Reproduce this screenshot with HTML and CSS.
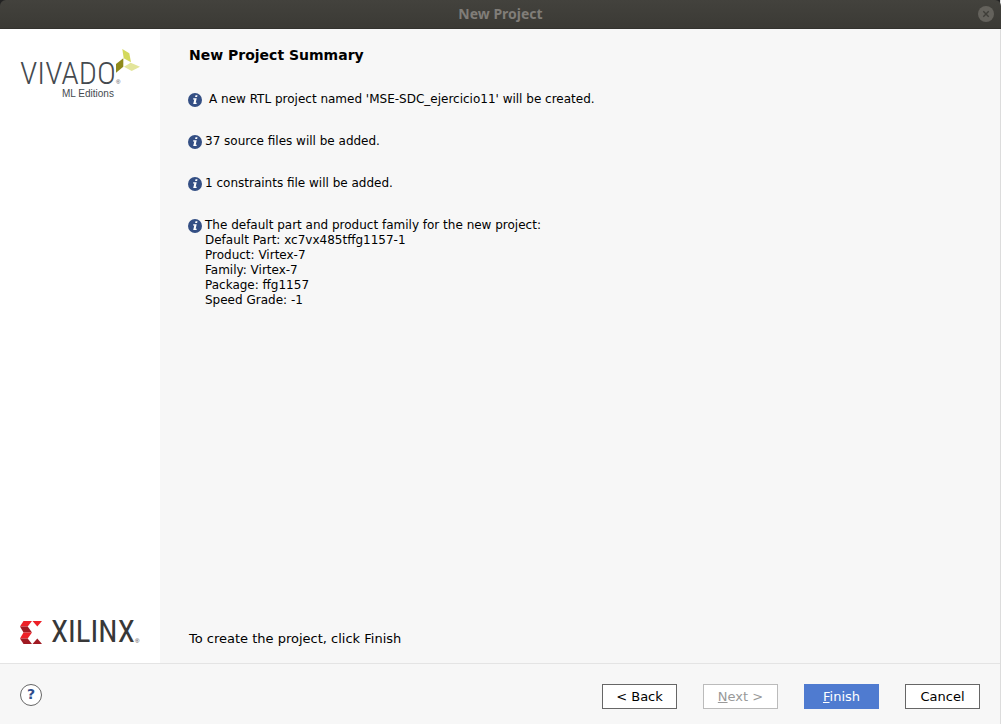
FILE: index.html
```
<!DOCTYPE html>
<html lang="en">
<head>
<meta charset="utf-8">
<title>New Project</title>
<link rel="stylesheet" href="styles.css">
</head>
<body>
<div class="window">
  <header class="titlebar">
    <span class="title">New Project</span>
    <button class="close" aria-label="Close">
      <svg viewBox="0 0 16 16" width="16" height="16"><circle cx="8" cy="8" r="8" fill="#64625c"/><path d="M5.3 5.3l5.4 5.4M10.7 5.3l-5.4 5.4" stroke="#3f3e39" stroke-width="1.4"/></svg>
    </button>
  </header>
  <div class="body">
    <aside class="sidebar">
      <div class="vivado">
        <svg class="leaf" viewBox="0 0 24 25" width="24" height="25"><path d="M6.300 0L13.300 4.300L15 13.300L7.700 9.300z" fill="#d3d95c"/><path d="M0 15L7.300 9.300V17.700L0 23.700z" fill="#8f8a1c"/><path d="M8 17.700L14.700 13.700L24 17.700L15.700 22z" fill="#e3e59b"/></svg>
        <div class="vivado-name">VIVADO<span class="mark">®</span></div>
        <div class="vivado-edition">ML Editions</div>
      </div>
      <div class="xilinx">
        <svg viewBox="0 0 22 23" width="22" height="23"><path d="M3.500 0H12L7.700 5.500H0z" fill="#ed2027"/><path d="M0 5.500H7.700L12 11.500H3.500z" fill="#a01a22"/><path d="M12.500 0H22L17.300 5.500z" fill="#ed2027"/><path d="M3.500 11.500H12L7.700 17.500H0z" fill="#ed2027"/><path d="M0 17.500H7.700L12 23H3.500z" fill="#a01a22"/><path d="M12.500 23L17.300 17.500L22 23z" fill="#a01a22"/></svg>
        <span class="xilinx-name">XILINX</span><span class="mark">®</span>
      </div>
    </aside>
    <main class="content">
      <h1>New Project Summary</h1>
      <ul class="summary">
        <li><svg class="info" viewBox="0 0 14 14"><circle cx="7" cy="7" r="7" fill="#344f84"/><path d="M7.500 2.300h2l-.4 1.800h-2zM5.300 5.300h3.400l-1 4.400h1.100l-.3 1.300H5.200l1.100-4.500H5z" fill="#fff"/></svg><p class="lead">A new RTL project named 'MSE-SDC_ejercicio11' will be created.</p></li>
        <li><svg class="info" viewBox="0 0 14 14"><circle cx="7" cy="7" r="7" fill="#344f84"/><path d="M7.500 2.300h2l-.4 1.800h-2zM5.300 5.300h3.400l-1 4.400h1.100l-.3 1.300H5.200l1.100-4.500H5z" fill="#fff"/></svg><p>37 source files will be added.</p></li>
        <li><svg class="info" viewBox="0 0 14 14"><circle cx="7" cy="7" r="7" fill="#344f84"/><path d="M7.500 2.300h2l-.4 1.800h-2zM5.300 5.300h3.400l-1 4.400h1.100l-.3 1.300H5.200l1.100-4.500H5z" fill="#fff"/></svg><p>1 constraints file will be added.</p></li>
        <li><svg class="info" viewBox="0 0 14 14"><circle cx="7" cy="7" r="7" fill="#344f84"/><path d="M7.500 2.300h2l-.4 1.800h-2zM5.300 5.300h3.400l-1 4.400h1.100l-.3 1.300H5.200l1.100-4.500H5z" fill="#fff"/></svg><p>The default part and product family for the new project:<br>Default Part: xc7vx485tffg1157-1<br>Product: Virtex-7<br>Family: Virtex-7<br>Package: ffg1157<br>Speed Grade: -1</p></li>
      </ul>
      <p class="hint">To create the project, click Finish</p>
    </main>
  </div>
  <footer class="footer">
    <button class="help" aria-label="Help">?</button>
    <div class="actions">
      <button class="btn">&lt; Back</button>
      <button class="btn" disabled><u>N</u>ext &gt;</button>
      <button class="btn primary"><u>F</u>inish</button>
      <button class="btn">Cancel</button>
    </div>
  </footer>
</div>
</body>
</html>
```
FILE: styles.css
```
* { box-sizing: border-box; }
body {
  margin: 0;
  background: #222;
  font: 13px/15px "DejaVu Sans", sans-serif;
  color: #000;
}
h1, p, ul { margin: 0; padding: 0; }
button { font: inherit; padding: 0; }
.window {
  display: flex;
  flex-direction: column;
  min-height: 100vh;
  border-right: 1px solid #dcdcdc;
}
.titlebar {
  display: grid;
  grid-template-columns: 23px 1fr 23px;
  align-items: center;
  height: 29px;
  margin-right: -1px;
  background: linear-gradient(#43423d, #3b3a35);
  border-bottom: 1px solid #33322e;
  border-radius: 6px 6px 0 0;
}
.title {
  grid-column: 2;
  text-align: center;
  font: bold 14px/16px "Noto Sans", sans-serif;
  color: #807d78;
}
.close {
  width: 16px;
  height: 16px;
  border: 0;
  background: none;
}
.close svg { display: block; }
.body { display: flex; flex: 1; background: #f7f7f7; }
.sidebar {
  display: flex;
  flex-direction: column;
  justify-content: space-between;
  width: 160px;
  padding: 20px 19px 19px 20px;
  background: #fff;
}
.vivado { position: relative; padding-top: 8px; color: #454a4f; }
.leaf { position: absolute; left: 96px; top: 0; }
.vivado-name {
  font: 300 32px/32px "Roboto Condensed", "Liberation Sans Narrow", sans-serif;
  white-space: nowrap;
}
.vivado-edition {
  padding-left: 42px;
  font: 10px/10px "Liberation Sans", sans-serif;
  white-space: nowrap;
}
.mark { font: 6px/6px "Liberation Sans", sans-serif; }
.xilinx { display: flex; align-items: flex-end; color: #383838; }
.xilinx svg { flex: none; }
.xilinx-name {
  padding-left: 9px;
  font: 31px/24px "Roboto Condensed", "Liberation Sans Narrow", sans-serif;
}
.content {
  display: flex;
  flex-direction: column;
  flex: 1;
  padding: 18px 28px 17px;
}
h1 { font-size: 14px; line-height: 17px; padding-left: 1px; }
.summary {
  display: grid;
  gap: 26px;
  padding-top: 28px;
  list-style: none;
  font-size: 12px;
}
.summary li { display: flex; gap: 3px; min-height: 16px; }
.info { width: 14px; height: 14px; margin-top: 1px; flex: none; }
.lead { padding-left: 4px; }
.hint { margin-top: auto; padding-left: 1px; }
.footer {
  display: flex;
  align-items: center;
  justify-content: space-between;
  height: 61px;
  padding: 4px 20px 0;
  background: #f7f7f7;
  border-top: 1px solid #e4e4e4;
}
.help {
  width: 22px;
  height: 22px;
  margin-bottom: 3px;
  border: 1px solid #666;
  border-radius: 50%;
  background: #fff;
  color: #2f4d8c;
  font-weight: bold;
  font-size: 14px;
}
.actions { display: flex; gap: 26px; }
.btn {
  width: 75px;
  height: 25px;
  border: 1px solid #666;
  background: #fff;
  color: #000;
}
.btn:disabled { border-color: #bbb; color: #999; }
.btn.primary { border-color: #4f7bd0; background: #4f7bd0; color: #fff; }
```
